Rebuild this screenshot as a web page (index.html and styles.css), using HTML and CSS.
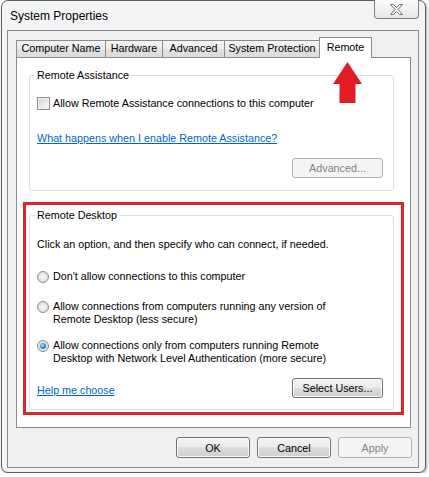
FILE: index.html
```html
<!DOCTYPE html>
<html>
<head>
<meta charset="utf-8">
<link rel="stylesheet" href="styles.css">
</head>
<body>
<div class="window">
  <div class="titlebar">
    <span class="title">System Properties</span>
    <div class="close">
      <svg width="13" height="11" viewBox="0 0 13 11"><polygon points="0.5,0.5 3.5,0.5 6.5,3.5 9.5,0.5 12.5,0.5 8,5.5 12.5,10.5 9.5,10.5 6.5,7.5 3.5,10.5 0.5,10.5 5,5.5" fill="#f7f7f7" stroke="#727272" stroke-width="1" stroke-linejoin="round"/></svg>
    </div>
  </div>
  <div class="client">
    <div class="tabs">
      <div class="tab tab-name">Computer Name</div>
      <div class="tab tab-hw">Hardware</div>
      <div class="tab tab-adv">Advanced</div>
      <div class="tab tab-sys">System Protection</div>
      <div class="tab tab-active">Remote</div>
    </div>
    <div class="panel">
      <fieldset class="group group-assist">
        <legend>Remote Assistance</legend>
        <div class="check-row"><span class="checkbox"></span><span>Allow Remote Assistance connections to this computer</span></div>
        <a class="link link-assist" href="#">What happens when I enable Remote Assistance?</a>
        <div class="btn-row"><span class="btn btn-disabled btn-wide">Advanced...</span></div>
      </fieldset>
      <div class="highlight">
        <fieldset class="group group-desktop">
          <legend>Remote Desktop</legend>
          <p class="intro">Click an option, and then specify who can connect, if needed.</p>
          <div class="radio-row row-first"><span class="radio"></span><span>Don't allow connections to this computer</span></div>
          <div class="radio-row row-second"><span class="radio"></span><span>Allow connections from computers running any version of<br>Remote Desktop (less secure)</span></div>
          <div class="radio-row row-third"><span class="radio radio-on"></span><span>Allow connections only from computers running Remote<br>Desktop with Network Level Authentication (more secure)</span></div>
          <div class="foot-row"><a class="link" href="#">Help me choose</a><span class="btn btn-wide">Select Users...</span></div>
        </fieldset>
      </div>
    </div>
    <div class="buttons">
      <span class="btn btn-dlg">OK</span>
      <span class="btn btn-dlg">Cancel</span>
      <span class="btn btn-dlg btn-disabled">Apply</span>
    </div>
  </div>
</div>
<svg class="arrow" width="31" height="43" viewBox="0 0 31 43"><polygon points="15.5,1 30,23 23.5,23 23.5,42 7.5,42 7.5,23 1,23" fill="#e31b23"/></svg>
</body>
</html>
```
FILE: styles.css
```css
* { box-sizing: border-box; }
body {
  margin: 0;
  background: #ffffff;
  font-family: "Liberation Sans", Arial, sans-serif;
  font-size: 10.75px;
  color: #000;
}
.window {
  margin-left: 1px;
  width: 425px;
  height: 473px;
  border: 1px solid #5e5e5e;
  border-radius: 7px 7px 7px 7px;
  background: #f3f4f6;
  box-shadow: 1px 1px 3px rgba(0,0,0,0.35);
  display: flex;
  flex-direction: column;
}
.titlebar {
  height: 29px;
  display: flex;
  justify-content: space-between;
  align-items: center;
  padding-left: 8px;
}
.title {
  font-size: 12px;
  color: #000;
}
.close {
  align-self: flex-start;
  margin-top: -1px;
  margin-right: 6px;
  width: 45px;
  height: 19px;
  border: 1px solid #7e7e7e;
  border-top: none;
  border-radius: 0 0 4px 4px;
  background: linear-gradient(#fbfbfb, #e6e8eb);
  display: flex;
  align-items: center;
  justify-content: center;
  padding-top: 1px;
}
.close svg { display: block; }
.client {
  flex: 1;
  margin: 0 6px 4px 5px;
  border: 1px solid #8d8d8d;
  background: #f0f0f0;
  padding: 6px 6px 0 8px;
  display: flex;
  flex-direction: column;
}
.tabs {
  height: 20px;
  display: flex;
  align-items: flex-end;
}
.tab {
  height: 17px;
  line-height: 15px;
  text-align: center;
  border: 1px solid #898c95;
  border-bottom: none;
  background: linear-gradient(#f4f4f4, #ececec 50%, #e2e2e2 50%, #dcdcdc);
  margin-left: -1px;
  white-space: nowrap;
}
.tab-name { margin-left: 0; width: 90px; }
.tab-hw { width: 58px; }
.tab-adv { width: 63px; }
.tab-sys { width: 96px; }
.tab-active {
  width: 53px;
  height: 21px;
  line-height: 18px;
  margin-bottom: -1px;
  background: #fff;
  position: relative;
  z-index: 2;
}
.panel {
  height: 371px;
  width: 395px;
  border: 1px solid #898c95;
  background: #fff;
  padding: 11px 0 0 6px;
}
.group {
  margin: 0;
  border: 1px solid #d5dfe5;
  border-radius: 3px;
  padding: 0 10px 0 7px;
  width: 365px;
  min-width: 0;
}
.group legend {
  padding: 0 2px;
  margin-left: -2px;
  line-height: 13px;
}
.group-assist {
  margin-left: 6px;
  padding-bottom: 12px;
}
.check-row {
  margin-top: 15px;
  display: flex;
  align-items: center;
  line-height: 13px;
  white-space: nowrap;
}
.checkbox {
  width: 13px;
  height: 13px;
  margin-right: 3px;
  border: 1px solid #8e8f8f;
  background: linear-gradient(135deg, #cdd0d4, #eef0f2 70%, #f6f6f6);
  box-shadow: inset 0 0 0 1px #f3f3f3;
  flex: none;
}
.link {
  color: #0066cc;
  text-decoration: underline;
  line-height: 13px;
  white-space: nowrap;
}
.link-assist {
  display: block;
  margin-top: 22px;
}
.btn-row {
  margin-top: 13px;
  display: flex;
  justify-content: flex-end;
}
.btn {
  display: flex;
  align-items: center;
  justify-content: center;
  height: 20px;
  border: 1px solid #707070;
  border-radius: 3px;
  background: linear-gradient(#f2f2f2, #ebebeb 50%, #dddddd 50%, #cfcfcf);
  box-shadow: inset 0 0 0 1px #fcfcfc;
  color: #000;
  white-space: nowrap;
}
.btn-wide { width: 91px; }
.btn-disabled {
  border-color: #adb2b5;
  background: #f4f4f4;
  box-shadow: none;
  color: #838383;
}
.highlight {
  margin-top: 11px;
  width: 381px;
  border: 3px solid #e0222b;
  padding: 4px 7px 2px 3px;
}
.group-desktop {
  padding-bottom: 11px;
}
.intro {
  margin: 16px 0 0 0;
  line-height: 13px;
  white-space: nowrap;
}
.radio-row {
  display: flex;
  align-items: flex-start;
  line-height: 13px;
  white-space: nowrap;
}
.row-first { margin-top: 19px; }
.row-second { margin-top: 17px; }
.row-third { margin-top: 13px; }
.radio {
  flex: none;
  width: 12px;
  height: 12px;
  margin: 1px 4px 0 0;
  border-radius: 50%;
  border: 1px solid #8f8f8f;
  background: radial-gradient(circle at 50% 50%, #f6f6f6 0, #e8e8e8 45%, #cfcfcf 100%);
  position: relative;
}
.radio-on::after {
  content: "";
  position: absolute;
  left: 2px;
  top: 2px;
  width: 6px;
  height: 6px;
  border-radius: 50%;
  background: radial-gradient(circle at 40% 35%, #a8dcff 0, #2f86d4 55%, #0e4f96 100%);
}
.foot-row {
  margin-top: 13px;
  display: flex;
  justify-content: space-between;
  align-items: flex-end;
}
.foot-row .link { margin-bottom: 1px; }
.buttons {
  margin-top: 9px;
  display: flex;
  justify-content: flex-end;
  gap: 7px;
  padding-right: 0;
}
.btn-dlg {
  width: 74px;
  height: 21px;
}
.arrow {
  position: absolute;
  left: 332px;
  top: 61px;
}
```
